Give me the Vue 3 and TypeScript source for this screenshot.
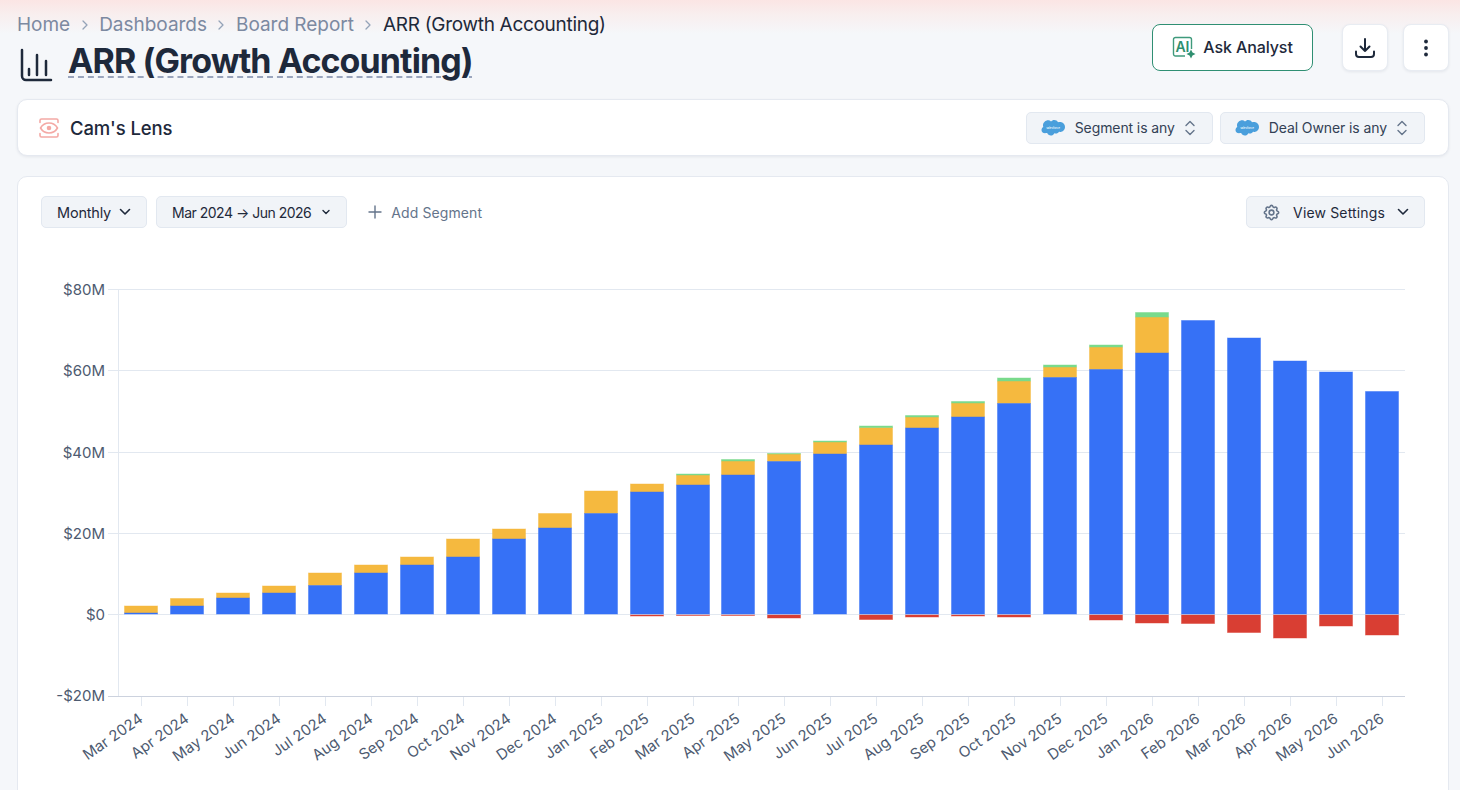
<script setup lang="ts">
interface Bar { label: string; blue: number; yellow?: number; green?: number; red?: number }

const BASE = 614
const raw: [string, number, number?, number?, number?][] = [
  ['Mar 2024', 613, 606],
  ['Apr 2024', 606, 598.5],
  ['May 2024', 598, 593],
  ['Jun 2024', 593, 586],
  ['Jul 2024', 585.5, 573],
  ['Aug 2024', 573, 565],
  ['Sep 2024', 565, 557],
  ['Oct 2024', 557, 539],
  ['Nov 2024', 539, 529],
  ['Dec 2024', 528, 513.5],
  ['Jan 2025', 513.5, 491],
  ['Feb 2025', 492, 484, undefined, 616],
  ['Mar 2025', 485, 475, 474, 615.5],
  ['Apr 2025', 475, 461, 459.5, 615.5],
  ['May 2025', 461.5, 454, 453.5, 618],
  ['Jun 2025', 454, 442, 441, 615],
  ['Jul 2025', 445, 427.5, 426, 619.5],
  ['Aug 2025', 428, 417, 415.5, 617],
  ['Sep 2025', 417, 403, 401.5, 616],
  ['Oct 2025', 403.5, 381, 378, 617],
  ['Nov 2025', 377.5, 367, 365],
  ['Dec 2025', 369.5, 347, 345, 620],
  ['Jan 2026', 353, 317, 312.5, 623],
  ['Feb 2026', 320.5, undefined, undefined, 623.5],
  ['Mar 2026', 338, undefined, undefined, 632.5],
  ['Apr 2026', 361, undefined, undefined, 638],
  ['May 2026', 372, undefined, undefined, 626],
  ['Jun 2026', 391.5, undefined, undefined, 635],
]
const bars = raw.map(([label, blue, yellow, green, red], i): Bar & { x: number } => ({
  label, blue, yellow, green, red, x: Math.round(141 + 45.96 * i),
}))
const gridLines = [
  { y: 289.5, label: '$80M' },
  { y: 370.5, label: '$60M' },
  { y: 452.5, label: '$40M' },
  { y: 533.5, label: '$20M' },
  { y: 614.5, label: '$0' },
]
const crumbs = ['Home', 'Dashboards', 'Board Report']
const filters = ['Segment is any', 'Deal Owner is any']
</script>

<template>
  <div class="page">
    <header class="head">
      <div class="head-left">
        <nav class="crumbs">
          <template v-for="c in crumbs" :key="c">
            <span class="crumb">{{ c }}</span>
            <svg class="crumb-sep" width="8" height="12" viewBox="0 0 8 12"><path d="M2 2l4 4-4 4" fill="none" stroke="#94a3b8" stroke-width="1.3" stroke-linecap="round" stroke-linejoin="round"/></svg>
          </template>
          <span class="crumb current">ARR (Growth Accounting)</span>
        </nav>
        <div class="title-row">
          <svg class="title-icon" width="34" height="34" viewBox="0 0 34 34" fill="none" stroke="#1e293b" stroke-width="2.5" stroke-linecap="round" stroke-linejoin="round">
            <path d="M3 2v26a4 4 0 0 0 4 4h25"/>
            <path d="M10 21v6M18 7v20M27 13v14"/>
          </svg>
          <h1 class="title">ARR (Growth Accounting)</h1>
        </div>
      </div>
      <div class="head-actions">
        <button class="ask">
          <svg width="24" height="23" viewBox="0 0 24 23" fill="none">
            <path d="M13 20H3.500a2 2 0 0 1-2-2V3.500a2 2 0 0 1 2-2h14a2 2 0 0 1 2 2V13" stroke="#3f9a7c" stroke-width="1.400"/>
            <text x="3.500" y="16" class="ai-text">AI</text>
            <path d="M19 13.500l1.500 3 3 1.500-3 1.500-1.500 3-1.500-3-3-1.500 3-1.500z" fill="#2f8f6f"/>
          </svg>
          <span>Ask Analyst</span>
        </button>
        <button class="icon-btn first">
          <svg width="24" height="24" viewBox="0 0 24 24" fill="none" stroke="#1e293b" stroke-width="2" stroke-linecap="round" stroke-linejoin="round">
            <path d="M12 3v12M7.500 10.500L12 15l4.500-4.500"/>
            <path d="M3 15.500v2.500a3 3 0 0 0 3 3h12a3 3 0 0 0 3-3v-2.500"/>
          </svg>
        </button>
        <button class="icon-btn">
          <svg width="6" height="20" viewBox="0 0 6 20" fill="#1e293b"><circle cx="3" cy="3.500" r="1.900"/><circle cx="3" cy="10" r="1.900"/><circle cx="3" cy="16.500" r="1.900"/></svg>
        </button>
      </div>
    </header>

    <section class="card lens">
      <div class="lens-name">
        <svg width="20" height="20" viewBox="0 0 20 20" fill="none" stroke="#f4a9a5" stroke-width="1.600" stroke-linecap="round" stroke-linejoin="round">
          <path d="M1 4.500V2.500a1.500 1.500 0 0 1 1.500-1.500h15a1.500 1.500 0 0 1 1.500 1.500v2M1 15.500v2a1.500 1.500 0 0 0 1.500 1.500h15a1.500 1.500 0 0 0 1.500-1.500v-2"/>
          <path d="M1.500 10c2-3.400 5-5 8.500-5s6.500 1.600 8.500 5c-2 3.400-5 5-8.500 5s-6.500-1.600-8.500-5z"/>
          <circle cx="10" cy="10" r="1.500" fill="#f4a9a5"/>
        </svg>
        <span>Cam's Lens</span>
      </div>
      <div class="lens-filters">
        <button v-for="f in filters" :key="f" class="pill filter">
          <svg class="sf" width="24" height="17" viewBox="0 0 24 17">
            <path fill="#4a9fdc" d="M10 2.500c.8-.9 2-1.500 3.200-1.500 1.700 0 3.100.9 3.800 2.300.6-.3 1.300-.4 2-.4 2.800 0 5 2.200 5 5s-2.200 5-5 5c-.4 0-.7 0-1-.1-.6 1.100-1.800 1.800-3.100 1.800-.6 0-1.100-.1-1.600-.4-.6 1.400-2 2.300-3.500 2.300-1.700 0-3.100-1-3.600-2.500-.2.100-.5.100-.7.100C2 14.700 .5 13 .5 11c0-1.300.7-2.500 1.800-3.100-.2-.5-.3-1-.3-1.500C2 3.500 4.700 1.300 7 1.300c1 0 2.400.4 3 1.200z"/>
            <text x="12" y="9.500" class="sf-text">salesforce</text>
          </svg>
          <span>{{ f }}</span>
          <svg width="10" height="16" viewBox="0 0 10 16" fill="none" stroke="#64748b" stroke-width="1.400" stroke-linecap="round" stroke-linejoin="round"><path d="M1 5.500L5 1.500l4 4M1 10.500l4 4 4-4"/></svg>
        </button>
      </div>
    </section>

    <section class="card chart-card">
      <div class="toolbar">
        <div class="toolbar-left">
          <button class="pill monthly">
            <span>Monthly</span>
            <svg width="12" height="8" viewBox="0 0 12 8" fill="none" stroke="#1e293b" stroke-width="1.600" stroke-linecap="round" stroke-linejoin="round"><path d="M1.500 1.500L6 6l4.500-4.500"/></svg>
          </button>
          <button class="pill range">
            <span>Mar 2024 → Jun 2026</span>
            <svg width="10" height="7" viewBox="0 0 10 7" fill="none" stroke="#1e293b" stroke-width="1.400" stroke-linecap="round" stroke-linejoin="round"><path d="M2 1.500L5 4.500l3-3"/></svg>
          </button>
          <button class="add">
            <svg width="14" height="14" viewBox="0 0 14 14" fill="none" stroke="#64748b" stroke-width="1.400" stroke-linecap="round"><path d="M7 1v12M1 7h12"/></svg>
            <span>Add Segment</span>
          </button>
        </div>
        <button class="pill settings">
          <svg width="19" height="19" viewBox="0 0 24 24" fill="none" stroke="#64748b" stroke-width="2" stroke-linecap="round" stroke-linejoin="round">
            <path d="M10.300 4.300c.4-1.800 3-1.800 3.400 0a1.700 1.700 0 0 0 2.600 1.100c1.500-.9 3.300.8 2.400 2.400a1.700 1.700 0 0 0 1 2.500c1.800.4 1.800 3 0 3.400a1.700 1.700 0 0 0-1 2.600c.9 1.500-.9 3.300-2.400 2.400a1.700 1.700 0 0 0-2.600 1c-.4 1.800-3 1.800-3.400 0a1.700 1.700 0 0 0-2.500-1c-1.600.9-3.300-.9-2.400-2.400a1.700 1.700 0 0 0-1.100-2.600c-1.800-.4-1.800-3 0-3.400a1.700 1.700 0 0 0 1.100-2.500c-.9-1.600.8-3.300 2.400-2.400a1.700 1.700 0 0 0 2.500-1.100z"/>
            <circle cx="12" cy="12" r="3"/>
          </svg>
          <span>View Settings</span>
          <svg width="12" height="8" viewBox="0 0 12 8" fill="none" stroke="#1e293b" stroke-width="1.600" stroke-linecap="round" stroke-linejoin="round"><path d="M1.500 1.500L6 6l4.500-4.500"/></svg>
        </button>
      </div>
    </section>

    <svg class="chart" width="1460" height="790" viewBox="0 0 1460 790">
      <g v-for="g in gridLines" :key="g.y">
        <line x1="108" x2="1405" :y1="g.y" :y2="g.y" stroke="#e2e8f0"/>
        <text x="105" :y="g.y + 5" text-anchor="end" class="axis">{{ g.label }}</text>
      </g>
      <text x="105" y="701" text-anchor="end" class="axis">-$20M</text>
      <line x1="118.500" x2="118.500" y1="289" y2="696" stroke="#e2e8f0"/>
      <line x1="108" x2="1405" y1="696.500" y2="696.500" stroke="#ccd2de"/>
      <g v-for="b in bars" :key="b.label">
        <line :x1="b.x + 0.5" :x2="b.x + 0.5" y1="697" y2="706" stroke="#e2e8f0"/>
        <rect v-if="b.red" :x="b.x - 16.5" y="615" width="33" :height="b.red - 615" class="b red"/>
        <rect v-if="b.yellow" :x="b.x - 16.5" :y="b.yellow" width="33" :height="b.blue - b.yellow" class="b yellow"/>
        <rect v-if="b.green" :x="b.x - 16.5" :y="b.green" width="33" :height="(b.yellow ?? b.blue) - b.green" class="b green"/>
        <rect :x="b.x - 16.5" :y="b.blue" width="33" :height="BASE - b.blue" class="b blue"/>
        <text :x="b.x + 3" y="721" text-anchor="end" class="axis tick" :transform="`rotate(-35 ${b.x + 3} 721)`">{{ b.label }}</text>
      </g>
    </svg>
  </div>
</template>

<style>
html, body { margin: 0; background: #f5f7fa; }
</style>

<style scoped>
.page {
  position: relative;
  width: 1460px;
  height: 790px;
  overflow: hidden;
  padding: 0 11px 0 17px;
  box-sizing: border-box;
  font-family: Inter, "Liberation Sans", sans-serif;
  color: #1e293b;
  background: linear-gradient(180deg, #fbe5e4 0, #f8eeee 14px, #f5f7fa 34px);
}
button { font-family: inherit; cursor: pointer; }
.head { display: flex; justify-content: space-between; align-items: flex-start; height: 99px; }
.head-left { padding-top: 13px; }
.crumbs { display: flex; align-items: center; gap: 9px; height: 23px; font-size: 19px; letter-spacing: -0.02px; }
.crumb { color: #7c89a1; }
.crumb.current { color: #1e293b; letter-spacing: -0.3px; }
.crumb-sep { margin: 0 1.500px; }
.title-row { display: flex; align-items: flex-start; gap: 15px; margin-top: 5px; margin-left: 2px; }
.title-icon { margin-top: 7px; }
.title {
  margin: 0;
  font-size: 34px;
  line-height: 40px;
  font-weight: 700;
  letter-spacing: -0.9px;
  color: #1e293b;
  text-decoration: underline dashed #9aa5bd 2px;
  text-underline-offset: 3px;
}
.head-actions { display: flex; align-items: center; padding-top: 24px; }
.ask {
  display: flex; align-items: center; justify-content: center; gap: 7px;
  width: 161px; height: 47px;
  background: #fff;
  border: 1px solid #2f8f73;
  border-radius: 8px;
  font-size: 16px; font-weight: 500; color: #1e293b;
  letter-spacing: -0.1px;
  padding: 0 0 1px;
}
.icon-btn {
  display: flex; align-items: center; justify-content: center;
  width: 46px; height: 47px; padding: 0; margin-left: 15px;
  background: #fff;
  border: 1px solid #e8ecf2;
  border-radius: 8px;
  box-shadow: 0 1px 3px rgba(30, 41, 59, .08);
}
.icon-btn.first { margin-left: 29px; }
.ai-text { font: 600 14px Inter, sans-serif; fill: #2f8f6f; }
.card {
  background: #fff;
  border: 1px solid #e5e9f0;
  border-radius: 10px;
  box-sizing: border-box;
}
.lens {
  display: flex; justify-content: space-between; align-items: center;
  height: 57px;
  padding: 1px 23px 0 21px;
  box-shadow: 0 1px 3px rgba(30, 41, 59, .08);
}
.lens-name { display: flex; align-items: center; gap: 11px; font-size: 18.500px; font-weight: 500; letter-spacing: -0.1px; }
.lens-filters { display: flex; gap: 7px; }
.pill {
  display: flex; align-items: center; gap: 8px;
  height: 32px;
  box-sizing: border-box;
  background: #f1f4f8;
  border: 1px solid #e2e8f0;
  border-radius: 5px;
  font-size: 14.500px; font-weight: 400; color: #1e293b;
  letter-spacing: -0.2px;
  padding: 0 15px;
}
.filter { gap: 10px; color: #334155; padding: 0 17px 1px 14px; font-size: 14px; letter-spacing: -0.1px; }
.sf-text { font: 3px Inter, sans-serif; fill: #fff; text-anchor: middle; }
.chart-card { margin-top: 20px; height: 640px; padding: 19px 23px; }
.toolbar { display: flex; justify-content: space-between; }
.toolbar-left { display: flex; align-items: center; gap: 9px; }
.range { gap: 10px; font-size: 14px; letter-spacing: -0.5px; }
.add {
  display: flex; align-items: center; gap: 9px;
  background: none; border: 0; padding: 0 0 0 12px;
  font-size: 14px; color: #64748b; letter-spacing: 0.1px;
}
.settings { gap: 12px; padding: 0 15px; font-size: 14px; letter-spacing: 0.15px; }
.chart { position: absolute; left: 0; top: 0; pointer-events: none; }
.axis { font: 400 15px Inter, "Liberation Sans", sans-serif; fill: #4d5a70; }
.tick { font-size: 15px; }
.b { stroke-width: 1; stroke-opacity: .45; }
.blue { fill: #3671f6; stroke: #3671f6; }
.yellow { fill: #f5b93f; stroke: #f5b93f; }
.green { fill: #79da8c; stroke: #79da8c; }
.red { fill: #d93e33; stroke: #d93e33; }
</style>
